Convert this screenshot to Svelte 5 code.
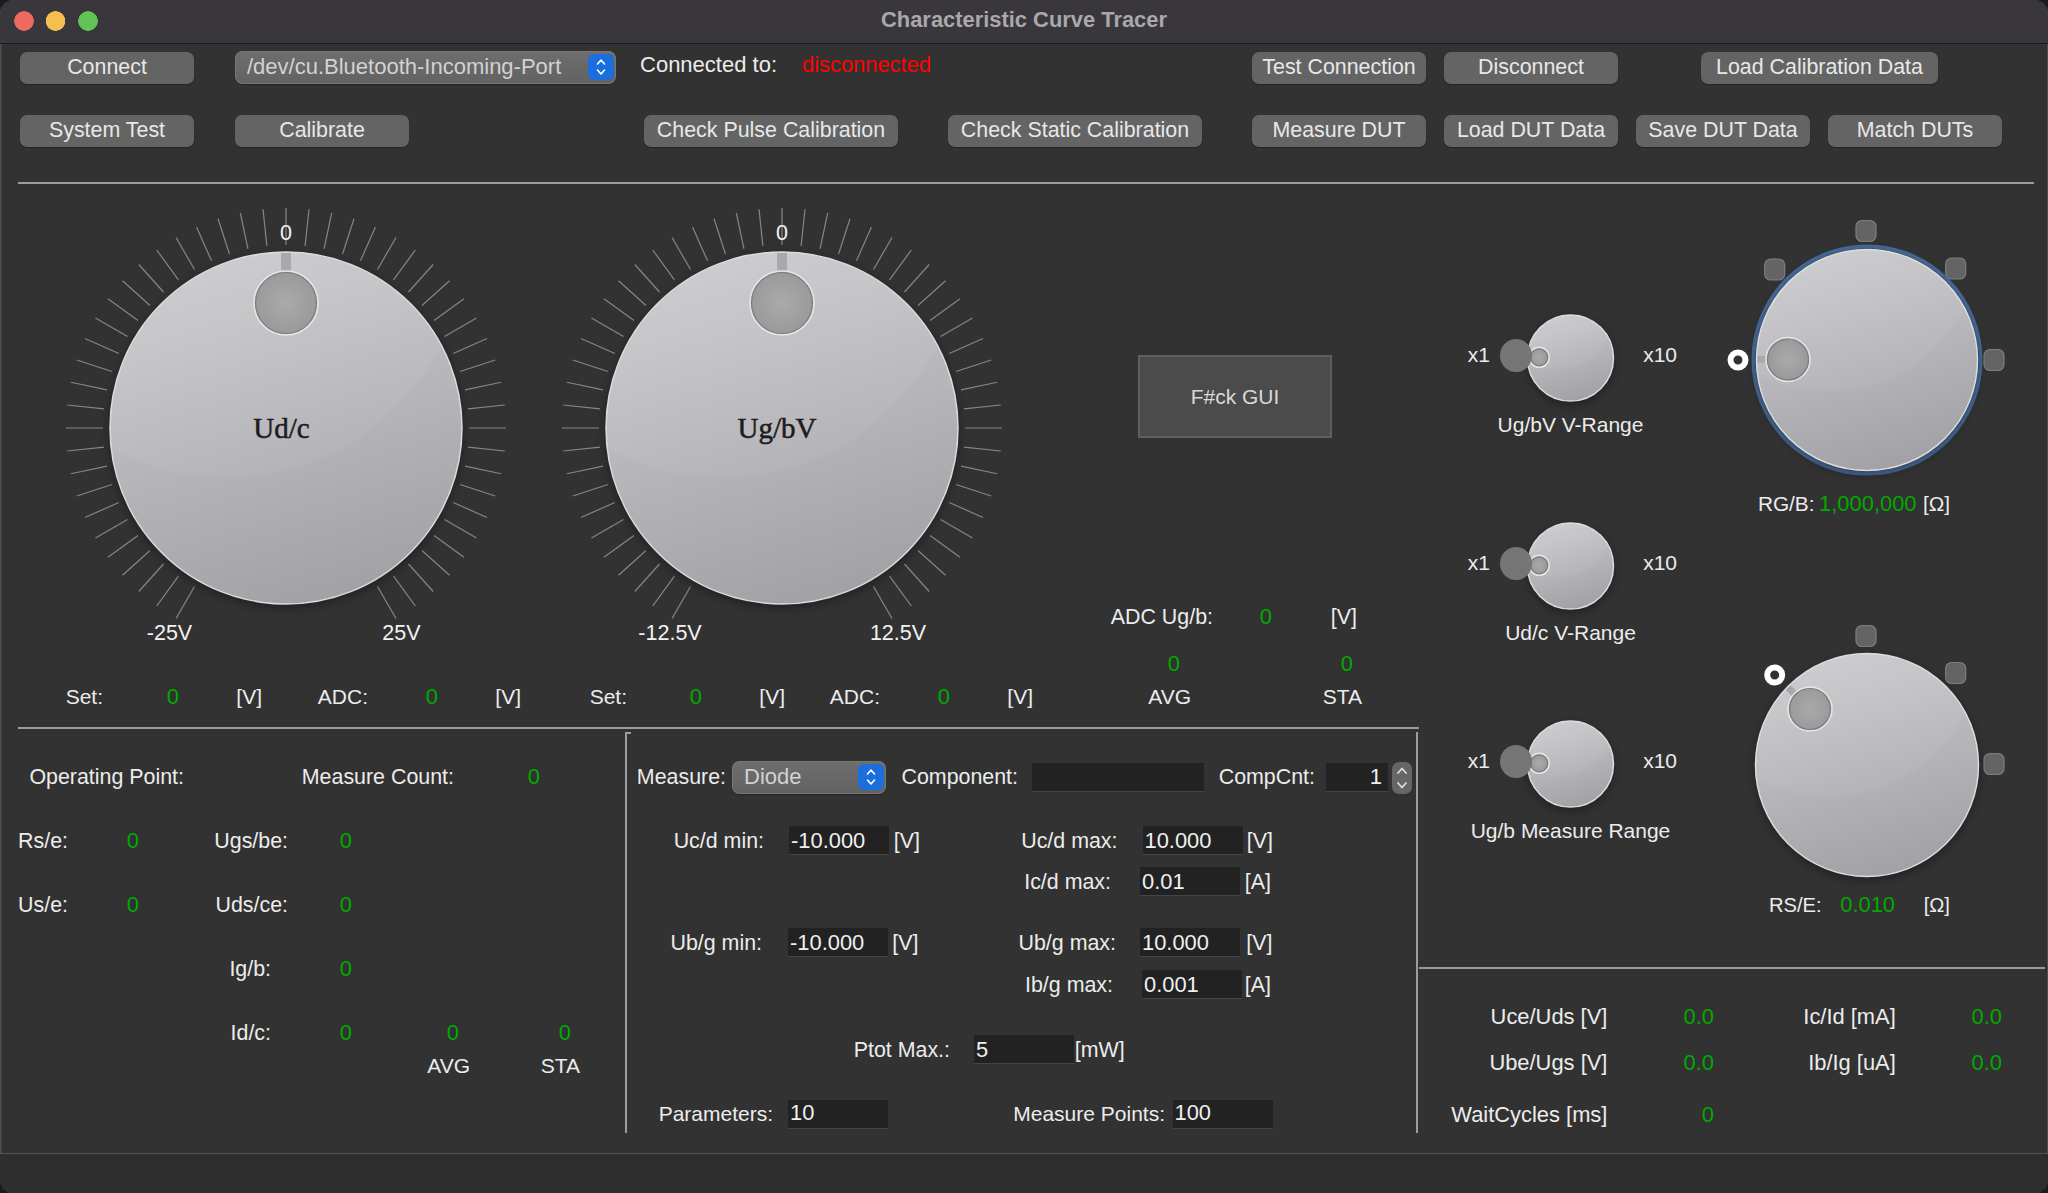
<script>
  const ticks = Array.from({ length: 51 }, (_, i) => {
    const a = ((i - 25) * 6 * Math.PI) / 180;
    return {
      x1: 183 * Math.sin(a),
      y1: -183 * Math.cos(a),
      x2: 220 * Math.sin(a),
      y2: -220 * Math.cos(a)
    };
  });

  const stops = {
    rg: [[-1, -129], [-92.3, -90.5], [88.7, -91.5], [127, 0]],
    rs: [[-1, -129], [88.7, -92], [127, -1]]
  };
</script>

{#snippet body(id, r, dx, dy, dr)}
  <defs>
    <linearGradient id="grad-{id}" x1="0.35" y1="0" x2="0.65" y2="1">
      <stop offset="0" stop-color="#cbcace" />
      <stop offset="1" stop-color="#a1a0a4" />
    </linearGradient>
    <radialGradient id="dot-{id}">
      <stop offset="0" stop-color="#aaaaab" />
      <stop offset="1" stop-color="#9a9a9c" />
    </radialGradient>
    <clipPath id="clip-{id}"><circle {r} /></clipPath>
  </defs>
  <g class="lift">
    <circle {r} fill="url(#grad-{id})" class="rim" />
  </g>
  <circle
    cx={-0.34 * r}
    cy={-1.08 * r}
    r={1.364 * r}
    fill="#fff"
    opacity="0.05"
    clip-path="url(#clip-{id})"
  />
  <line
    x1={(dx / Math.hypot(dx, dy)) * (r - 1)}
    y1={(dy / Math.hypot(dx, dy)) * (r - 1)}
    x2={dx}
    y2={dy}
    class="stub"
    stroke-width={dr * 0.32}
    clip-path="url(#clip-{id})"
  />
  <circle cx={dx} cy={dy} r={dr + 1} class="halo" />
  <circle cx={dx} cy={dy} r={dr - 0.5} fill="url(#dot-{id})" class="well" />
{/snippet}

{#snippet dial(id, name, nameX, low, high)}
  <svg class="dial" viewBox="-220 -220 440 440" aria-label={name}>
    {#each ticks as t}
      <line x1={t.x1} y1={t.y1} x2={t.x2} y2={t.y2} class="tick" />
    {/each}
    {@render body(id, 176, 0, -125, 31)}
    <text x={nameX} y="10" class="knob-name" text-anchor="middle">{name}</text>
    <text x="0" y="-188" class="scale" text-anchor="middle">0</text>
    <text x={low} y="212" class="scale" text-anchor="middle">{low === -116.5 ? '-25V' : '-12.5V'}</text>
    <text x={high} y="212" class="scale" text-anchor="middle">{high === 115.5 ? '25V' : '12.5V'}</text>
  </svg>
{/snippet}

{#snippet range(id, label)}
  <div class="range">
    <div class="g range-row">
      <span class="up2">x1</span>
      <svg class="mini" viewBox="-70.5 -44 114 88">
        {@render body(id, 43, -31.3, -0.7, 9)}
        <ellipse cx="-54.5" cy="-2.5" rx="16" ry="16.5" class="handle" />
      </svg>
      <span class="up2">x10</span>
    </div>
    <div class="range-label">{label}</div>
  </div>
{/snippet}

{#snippet stepKnob(id, list, sel, dx, dy, ring)}
  <svg class="step" viewBox="-145 -145 290 262">
    {#each list as s}
      <rect x={s[0] - 10} y={s[1] - 10.5} width="20" height="21" rx="6" class="pos" />
    {/each}
    {#if ring}<circle r="113.5" class="focus" />{/if}
    {@render body(id, ring ? 110.5 : 111.5, dx, dy, 21)}
    <circle cx={sel[0]} cy={sel[1]} r="7.5" class="sel" />
  </svg>
{/snippet}

{#snippet chevrons()}
  <svg class="chev" viewBox="0 0 12 22">
    <path d="M2.5 8 L6 4 L9.5 8 M2.5 14 L6 18 L9.5 14" />
  </svg>
{/snippet}

<div class="window">
  <header class="titlebar">Characteristic Curve Tracer</header>

  <section class="toolbar">
    <div class="g tb1">
      <button class="w174">Connect</button>
      <div class="select port"><span>/dev/cu.Bluetooth-Incoming-Port</span><b class="stepper">{@render chevrons()}</b></div>
      <span class="up4 conn">Connected to:</span>
      <span class="red up4">disconnected</span>
      <button class="w174">Test Connection</button>
      <button class="w174">Disconnect</button>
      <button class="w237">Load Calibration Data</button>
    </div>
    <div class="g tb2">
      <button class="w174">System Test</button>
      <button class="w174">Calibrate</button>
      <button class="w254">Check Pulse Calibration</button>
      <button class="w254">Check Static Calibration</button>
      <button class="w174">Measure DUT</button>
      <button class="w174">Load DUT Data</button>
      <button class="w174">Save DUT Data</button>
      <button class="w174">Match DUTs</button>
    </div>
  </section>
  <hr class="rule full" />

  <div class="columns">
    <div class="left">
      <div class="dials">
        <div class="dial-a">{@render dial('ud', 'Ud/c', -4.5, -116.5, 115.5)}</div>
        <div class="dial-b">{@render dial('ug', 'Ug/bV', -5, -112, 116)}</div>
        <div class="side">
          <div class="fbox">F#ck GUI</div>
          <div class="g adc"><span>ADC Ug/b:</span><span class="v">0</span><span>[V]</span></div>
          <div class="g adc2"><span class="v">0</span><span class="v">0</span></div>
        </div>
      </div>
      <div class="g setrow">
        <span>Set:</span><span class="v">0</span><span>[V]</span>
        <span>ADC:</span><span class="v">0</span><span>[V]</span>
        <span>Set:</span><span class="v">0</span><span>[V]</span>
        <span>ADC:</span><span class="v">0</span><span>[V]</span>
        <span>AVG</span><span>STA</span>
      </div>
      <hr class="rule mid" />

      <div class="lower">
        <div class="oper">
          <div class="g op op1"><span>Operating Point:</span><span>Measure Count:</span><span class="v">0</span></div>
          <div class="g op op2"><span>Rs/e:</span><span class="v">0</span><span>Ugs/be:</span><span class="v">0</span></div>
          <div class="g op op2"><span>Us/e:</span><span class="v">0</span><span>Uds/ce:</span><span class="v">0</span></div>
          <div class="g op op3"><span>Ig/b:</span><span class="v">0</span></div>
          <div class="g op op4 tight"><span>Id/c:</span><span class="v">0</span><span class="v">0</span><span class="v">0</span></div>
          <div class="g op op5"><span>AVG</span><span>STA</span></div>
        </div>

        <div class="measure">
          <div class="g ma">
            <span>Measure:</span>
            <div class="select kind"><span>Diode</span><b class="stepper">{@render chevrons()}</b></div>
            <span>Component:</span>
            <input class="field comp" value="" />
            <span>CompCnt:</span>
            <input class="field count" value="1" />
            <div class="spin"><svg class="chev tall" viewBox="0 0 12 28"><path d="M2 9 L6 4.5 L10 9 M2 19 L6 23.5 L10 19" /></svg></div>
          </div>
          <div class="g mr mb">
            <span>Uc/d min:</span><input class="field" value="-10.000" /><span>[V]</span>
            <span>Uc/d max:</span><input class="field" value="10.000" /><span>[V]</span>
          </div>
          <div class="g mr mc">
            <span>Ic/d max:</span><input class="field" value="0.01" /><span>[A]</span>
          </div>
          <div class="g mr md">
            <span>Ub/g min:</span><input class="field" value="-10.000" /><span>[V]</span>
            <span>Ub/g max:</span><input class="field" value="10.000" /><span>[V]</span>
          </div>
          <div class="g mr me">
            <span>Ib/g max:</span><input class="field" value="0.001" /><span>[A]</span>
          </div>
          <div class="g mr mf">
            <span>Ptot Max.:</span><input class="field" value="5" /><span>[mW]</span>
          </div>
          <div class="g mr mg">
            <span>Parameters:</span><input class="field" value="10" />
            <span>Measure Points:</span><input class="field" value="100" />
          </div>
        </div>
      </div>
    </div>

    <div class="right">
      <div class="knobs">
        <div class="ranges">
          {@render range('r1', 'Ug/bV V-Range')}
          {@render range('r2', 'Ud/c V-Range')}
          {@render range('r3', 'Ug/b Measure Range')}
        </div>
        <div class="bigs">
          {@render stepKnob('rg', stops.rg, [-129, 0], -79, -0.5, true)}
          <div class="g rg"><span>RG/B:</span><span class="v">1,000,000</span><span>[Ω]</span></div>
          {@render stepKnob('rs', stops.rs, [-92.3, -90], -57, -56, false)}
          <div class="g rs"><span>RS/E:</span><span class="v">0.010</span><span>[Ω]</span></div>
        </div>
      </div>
      <hr class="rule side-rule" />
      <div class="readouts">
        <div class="g ro"><span>Uce/Uds [V]</span><span class="v">0.0</span><span>Ic/Id [mA]</span><span class="v">0.0</span></div>
        <div class="g ro r2"><span>Ube/Ugs [V]</span><span class="v">0.0</span><span>Ib/Ig [uA]</span><span class="v">0.0</span></div>
        <div class="g ro r3"><span>WaitCycles [ms]</span><span class="v">0</span></div>
      </div>
    </div>
  </div>

  <footer class="status"></footer>
</div>

<style>
  :global(body) {
    margin: 0;
    background: #1c1c1e;
  }

  .window {
    width: 2048px;
    height: 1193px;
    box-sizing: border-box;
    display: flex;
    flex-direction: column;
    overflow: hidden;
    background: #323232;
    border-radius: 14px;
    box-shadow: inset 1.5px 0 0 #4e4e4e, inset -1px 0 0 #4e4e4e;
    font-family: "Liberation Sans", Arial, sans-serif;
    font-size: 21.4px;
    color: #ececec;
  }

  .titlebar {
    height: 43px;
    flex: none;
    box-sizing: content-box;
    border-bottom: 1px solid #1b1b1b;
    background: #39373c;
    background-image:
      radial-gradient(circle at 24px 21px, #ee6a5e 9.5px, transparent 10px),
      radial-gradient(circle at 55.5px 21px, #f5bf4f 9.5px, transparent 10px),
      radial-gradient(circle at 88px 21px, #61c454 9.5px, transparent 10px);
    color: #a9a8ab;
    font-size: 21.9px;
    font-weight: 700;
    line-height: 39px;
    text-align: center;
  }

  /* A row: each track runs up to the right edge of the widget it holds. */
  .g {
    display: grid;
    align-items: center;
    justify-items: end;
    white-space: nowrap;
    height: 30px;
  }

  .v { color: #00aa00; font-size: 21.9px; }
  .red { color: #ff0000; font-size: 21.9px; }
  .up2 { margin-top: -7px; }
  .up4 { margin-top: -5px; }
  .conn { font-size: 22px; }

  button {
    height: 32px;
    padding: 0 0 1px;
    border: 0;
    border-radius: 7px;
    background: #646464;
    box-shadow: 0 1px 1px rgba(0, 0, 0, 0.3);
    color: #e8e8e8;
    font: inherit;
  }
  .w174 { width: 174px; }
  .w237 { width: 237px; }
  .w254 { width: 254px; }

  .toolbar {
    flex: none;
    padding: 7px 0 0 20px;
  }
  .tb1 {
    height: 33px;
    grid-template-columns: 174px 422px 161px 154px 495px 192px 320px;
  }
  .tb2 {
    height: 32px;
    margin-top: 31px;
    grid-template-columns: 174px 215px 489px 304px 224px 192px 192px 192px;
  }

  .rule {
    height: 2px;
    margin: 0;
    border: 0;
    background: #9c9c9c;
  }
  .full {
    flex: none;
    width: 2016px;
    margin: 35px 0 0 18px;
  }
  .mid {
    width: 1401px;
    margin: 15px 0 0 18px;
  }
  .side-rule {
    width: 626px;
    margin-top: -1px;
  }

  .select {
    display: flex;
    align-items: center;
    justify-content: space-between;
    box-sizing: border-box;
    height: 33px;
    padding: 0 2px 2px 12px;
    border-radius: 8px;
    background: linear-gradient(#6e6e6e, #626262);
    box-shadow: inset 0 0 0 1px #777, 0 1px 1px rgba(0, 0, 0, 0.3);
    color: #d2d2d2;
  }
  .port { width: 381px; font-size: 22px; }
  .kind { width: 154px; font-size: 22px; }
  .stepper {
    display: flex;
    align-items: center;
    justify-content: center;
    width: 26px;
    height: 26px;
    border-radius: 6px;
    background: #1a6fdc;
  }
  .chev {
    width: 12px;
    height: 22px;
    fill: none;
    stroke: #fff;
    stroke-width: 1.6;
    stroke-linecap: round;
    stroke-linejoin: round;
  }
  .tall {
    height: 28px;
    stroke: #ddd;
    stroke-width: 1.8;
  }

  .columns {
    flex: 1;
    display: flex;
    min-height: 0;
  }
  .left {
    width: 1419px;
    flex: none;
  }
  .right {
    flex: 1;
  }

  .dials {
    display: flex;
    height: 498px;
    padding-top: 24px;
    box-sizing: border-box;
  }
  .dial-a { margin-left: 66px; }
  .dial-b { margin-left: 56px; }
  .dial {
    display: block;
    width: 440px;
    height: 440px;
  }
  .tick {
    stroke: #868686;
    stroke-width: 1.2;
  }
  .lift { filter: drop-shadow(0 3px 5px rgba(0, 0, 0, 0.35)); }
  .rim {
    stroke: #dcdcdc;
    stroke-width: 1.5;
  }
  .stub { stroke: #a9a9ab; }
  .halo {
    fill: none;
    stroke: #e6e6e6;
    stroke-width: 1.5;
  }
  .well {
    stroke: #7c7c7c;
    stroke-width: 1.2;
  }
  .knob-name {
    font-family: "Liberation Serif", "Times New Roman", serif;
    font-size: 29px;
    fill: #1c1c1c;
    stroke: #1c1c1c;
    stroke-width: 0.5;
  }
  .scale {
    font-size: 21.5px;
    fill: #f2f2f2;
  }

  .side {
    width: 355px;
    margin-top: 0;
  }
  .fbox {
    display: flex;
    align-items: center;
    justify-content: center;
    box-sizing: border-box;
    width: 194px;
    height: 83px;
    margin: 147px 0 0 136px;
    border: 2px solid #5f5f5f;
    background: #4b4b4b;
    color: #d9d9d9;
    font-size: 21px;
  }
  .adc {
    margin-top: 164px;
    grid-template-columns: 211px 59px 85px;
  }
  .adc2 {
    margin-top: 17px;
    grid-template-columns: 178px 173px;
  }
  .setrow {
    grid-template-columns: 103px 76px 83px 106px 70px 83px 106px 75px 83px 95px 70px 83px 158px 171px;
    font-size: 21px;
  }

  .lower {
    display: flex;
  }
  .oper {
    width: 625px;
    flex: none;
    padding-top: 33px;
  }
  .op { margin-bottom: 34px; }
  .op.tight { margin-bottom: 3px; }
  .op1 { grid-template-columns: 184px 270px 86px; }
  .op2 { grid-template-columns: 68px 71px 149px 64px; }
  .op3 { grid-template-columns: 271px 81px; }
  .op4 { grid-template-columns: 271px 81px 107px 112px; }
  .op5 { grid-template-columns: 470px 110px; font-size: 21px; }

  .measure {
    width: 793px;
    height: 401px;
    flex: none;
    box-sizing: border-box;
    margin-top: 3px;
    padding-top: 29px;
    border-left: 2px solid #9c9c9c;
    border-right: 2px solid #9c9c9c;
    background: linear-gradient(#9c9c9c, #9c9c9c) 0 0 / 4px 2px no-repeat;
  }
  .field {
    box-sizing: border-box;
    width: 100px;
    height: 29px;
    padding: 0 2px;
    border: 0;
    border-bottom: 1px solid #444;
    border-radius: 0;
    background: #222;
    color: #f0f0f0;
    font: inherit;
    font-size: 21.9px;
    outline: none;
  }
  .comp { width: 172px; }
  .count {
    width: 62px;
    text-align: right;
    padding-right: 6px;
  }
  .spin {
    display: flex;
    align-items: center;
    justify-content: center;
    width: 20px;
    height: 32px;
    border-radius: 7px;
    background: #666;
  }
  .ma {
    height: 32px;
    grid-template-columns: 99px 160px 132px 186px 111px 73px 24px;
  }
  .mr { height: 29px; }
  .mr span { margin-top: 2px; }
  .mr .field { padding-top: 1px; }
  .mb { margin-top: 33px; grid-template-columns: 137px 125px 31px 197.5px 125px 30.5px; }
  .mc { margin-top: 12px; grid-template-columns: 484px 129px 31px; }
  .md { margin-top: 32px; grid-template-columns: 135px 126px 30.5px 197.5px 124px 32.5px; }
  .me { margin-top: 13px; grid-template-columns: 486px 129px 29px; }
  .mf { margin-top: 36px; grid-template-columns: 323px 124px 50.6px; }
  .mg { margin-top: 36px; grid-template-columns: 146px 115px 277px 107.5px; font-size: 21px; }
  .mg span { margin-top: -1px; }
  .mg .field { padding-top: 0; padding-bottom: 2px; }

  .knobs {
    display: flex;
    height: 784px;
  }
  .ranges {
    width: 303px;
    flex: none;
    padding-top: 130px;
    box-sizing: border-box;
    font-size: 21px;
  }
  .range { height: 208px; }
  .range:nth-child(2) { height: 198px; }
  .range-row {
    height: 88px;
    grid-template-columns: 71px 124px 63px;
  }
  .mini {
    display: block;
    width: 114px;
    height: 88px;
    overflow: visible;
  }
  .handle { fill: #757575; }
  .range-label {
    height: 30px;
    margin-top: 8px;
    line-height: 30px;
    text-align: center;
    white-space: nowrap;
  }

  .bigs {
    flex: 1;
    padding-top: 31px;
  }
  .step {
    display: block;
    width: 290px;
    height: 262px;
    overflow: visible;
  }
  .pos {
    fill: #646464;
    stroke: #7e7e7e;
    stroke-width: 1.2;
  }
  .focus {
    fill: none;
    stroke: #466a9a;
    stroke-width: 4;
  }
  .sel {
    fill: none;
    stroke: #fff;
    stroke-width: 6;
  }
  .rg {
    margin: 12px 0 101px;
    grid-template-columns: 92.5px 102px 33.5px;
    font-size: 20.8px;
  }
  .rs {
    margin-top: 8px;
    grid-template-columns: 99.7px 73.3px 55px;
    font-size: 20.2px;
  }

  .readouts {
    padding-top: 33px;
    font-size: 21.9px;
  }
  .ro { grid-template-columns: 188.4px 106.6px 181.8px 106.2px; }
  .r2 { margin-top: 16px; }
  .r3 { margin-top: 22px; }

  .status {
    flex: none;
    height: 39px;
    border-top: 1px solid #565656;
    background: #2e2e2e;
  }
</style>
